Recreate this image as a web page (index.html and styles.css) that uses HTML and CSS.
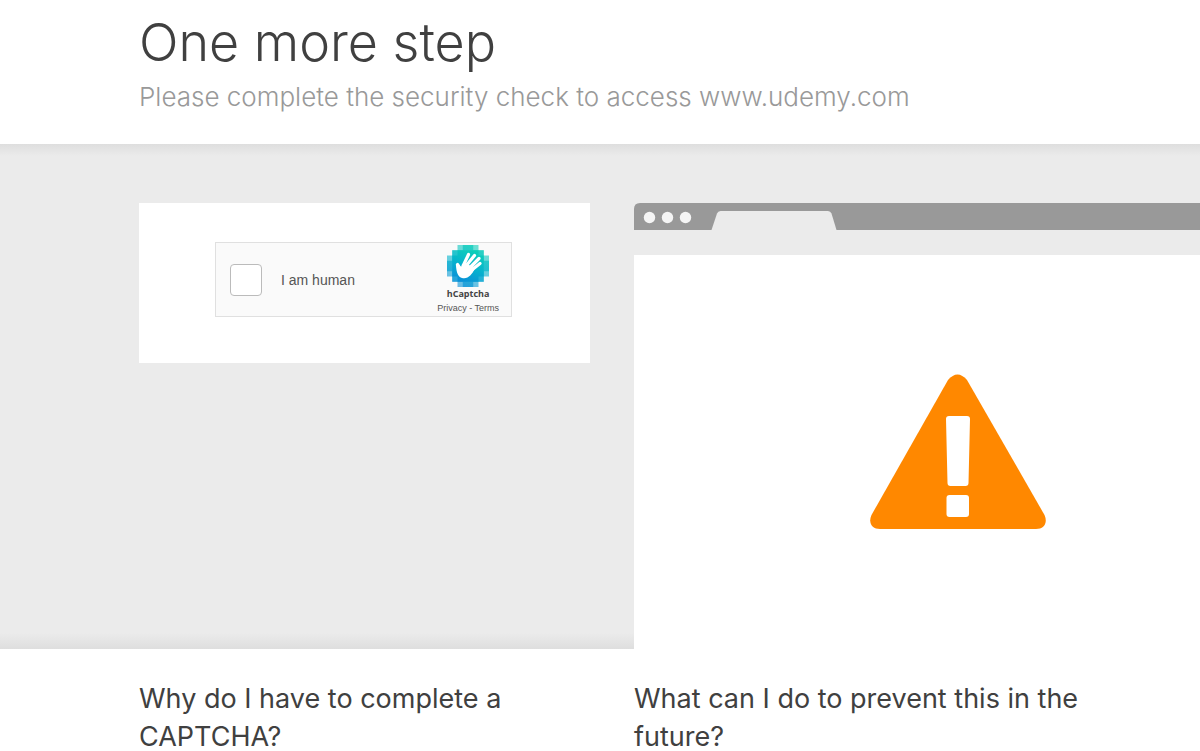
FILE: index.html
```html
<!DOCTYPE html>
<html lang="en">
<head>
<meta charset="utf-8">
<meta name="viewport" content="width=device-width, initial-scale=1">
<title>One more step</title>
<link rel="stylesheet" href="styles.css">
</head>
<body>
<header class="header wrapper">
  <h1 class="title">One more step</h1>
  <p class="subtitle">Please complete the security check to access www.udemy.com</p>
</header>
<main>
  <section class="highlight">
    <div class="wrapper columns">
      <div class="captcha-card">
        <form class="captcha">
          <input class="captcha-check" type="checkbox" id="human">
          <label class="captcha-label" for="human">I am human</label>
          <div class="brand">
            <svg class="brand-logo" viewBox="0 0 42 42" aria-hidden="true">
              <defs>
                <linearGradient id="teal" x1="0.3" y1="1" x2="0.7" y2="0">
                  <stop offset="0" stop-color="#0a8fd8"/>
                  <stop offset="0.5" stop-color="#06b3cd"/>
                  <stop offset="1" stop-color="#0cd0b8"/>
                </linearGradient>
              </defs>
              <g fill="url(#teal)">
                <path opacity=".6" d="M10.500 0h21v5.250h5.250v5.250h5.250v21h-5.250v5.250h-5.250v5.250h-21v-5.250h-5.250v-5.250h-5.250v-21h5.250v-5.250h5.250z"/>
                <path opacity=".7" d="M15.750 0h10.500v5.250h10.500v10.500h5.250v10.500h-5.250v10.500h-10.500v5.250h-10.500v-5.250h-10.500v-10.500h-5.250v-10.500h5.250v-10.500h10.500z"/>
                <path d="M10.500 5.250h21v5.250h5.250v21h-5.250v5.250h-21v-5.250h-5.250v-21h5.250z"/>
              </g>
              <path fill="none" stroke="#fff" stroke-width="3.200" stroke-linecap="round" d="M16.500 20L21.500 9.500M19 21L27.500 10.500M21.500 24L32 13.500M23.500 26L33 18.500M14 25L10.500 19.500"/>
              <path fill="#fff" d="M14.900 19.500L20.500 18.500L27.500 24.500C25 29 21.500 34 16 33.200C11 32.300 9.500 28 8.900 20L11.500 18.500L14 22z"/>
            </svg>
            <span class="brand-name">hCaptcha</span>
            <span class="brand-links"><a href="#privacy">Privacy</a> - <a href="#terms">Terms</a></span>
          </div>
        </form>
      </div>
      <div class="browser">
        <svg class="browser-bar" viewBox="0 0 648 27" aria-hidden="true">
          <path fill="#999" d="M0 27V6Q0 0 6 0H642Q648 0 648 6V27z"/>
          <path fill="#ebebeb" d="M77.500 27L83 10.500Q84 8 86.500 8H194Q196.500 8 197.500 10.500L202.500 27z"/>
          <g fill="#f5f5f5"><circle cx="15.500" cy="14.500" r="5.700"/><circle cx="33.500" cy="14.500" r="5.700"/><circle cx="51.500" cy="14.500" r="5.700"/></g>
        </svg>
        <div class="browser-page">
          <svg class="warning" viewBox="0 0 176 156" role="img" aria-label="Warning">
            <path fill="#ff8800" d="M78 6Q87.500 -5 97 6L174.500 141C178 149 174 155 166 155H10C2 155 -2 149 1.500 141z"/>
            <path fill="#fff" d="M79 42H97Q100 42 100 45L98.500 109Q98.500 112 95.500 112H80.500Q77.500 112 77.500 109L76 45Q76 42 79 42z"/>
            <rect fill="#fff" x="76.500" y="121" width="22.500" height="22" rx="3"/>
          </svg>
        </div>
      </div>
    </div>
  </section>
  <section class="wrapper columns questions">
    <h2 class="question">Why do I have to complete a CAPTCHA?</h2>
    <h2 class="question">What can I do to prevent this in the future?</h2>
  </section>
</main>
</body>
</html>
```
FILE: styles.css
```css
body {
  margin: 0;
  background: #fff;
  color: #404040;
  font-family: Inter, "Liberation Sans", sans-serif;
  overflow-x: hidden;
}

.wrapper {
  padding-left: 139px;
}

.header {
  padding-top: 8px;
  padding-bottom: 28px;
}

.title {
  margin: 0;
  font-size: 52px;
  font-weight: 300;
  line-height: 70px;
}

.subtitle {
  margin: 0;
  color: #999;
  font-size: 26px;
  font-weight: 300;
  line-height: 38px;
}

.columns {
  display: grid;
  grid-template-columns: 451px 451px;
  column-gap: 44px;
}

.highlight {
  padding-top: 59px;
  overflow: hidden;
  background:
    linear-gradient(#dedede, #ebebeb00 12px),
    linear-gradient(to top, #dedede, #ebebeb00 16px),
    #ebebeb;
}

.captcha-card {
  align-self: start;
  padding: 39px 76px 46px;
  background: #fff;
}

.captcha {
  box-sizing: border-box;
  display: flex;
  align-items: center;
  max-width: 297px;
  height: 75px;
  padding: 0 12px 0 14px;
  border: 1px solid #e0e0e0;
  background: #fafafa;
  font-family: "Liberation Sans", sans-serif;
}

.captcha-check {
  appearance: none;
  box-sizing: border-box;
  width: 32px;
  height: 32px;
  margin: 0;
  border: 1px solid #bbb;
  border-radius: 4px;
  background: #fff;
}

.captcha-label {
  margin-left: 19px;
  color: #555;
  font-size: 14px;
}

.brand {
  display: flex;
  flex-direction: column;
  align-items: center;
  margin-left: auto;
}

.brand-logo {
  width: 42px;
  height: 42px;
}

.brand-name {
  color: #444;
  font-family: "Open Sans", sans-serif;
  font-size: 9px;
  font-weight: 700;
  line-height: 14px;
}

.brand-links,
.brand-links a {
  color: #555;
  font-size: 9px;
  line-height: 14px;
  text-decoration: none;
}

.browser {
  width: 648px;
}

.browser-bar {
  display: block;
  width: 100%;
}

.browser-page {
  display: flex;
  justify-content: center;
  margin-top: 25px;
  padding: 119px 0;
  background: #fff;
}

.warning {
  width: 176px;
  height: 156px;
}

.questions {
  padding-top: 31px;
}

.question {
  margin: 0;
  font-size: 27px;
  font-weight: 400;
  line-height: 38px;
}
```
